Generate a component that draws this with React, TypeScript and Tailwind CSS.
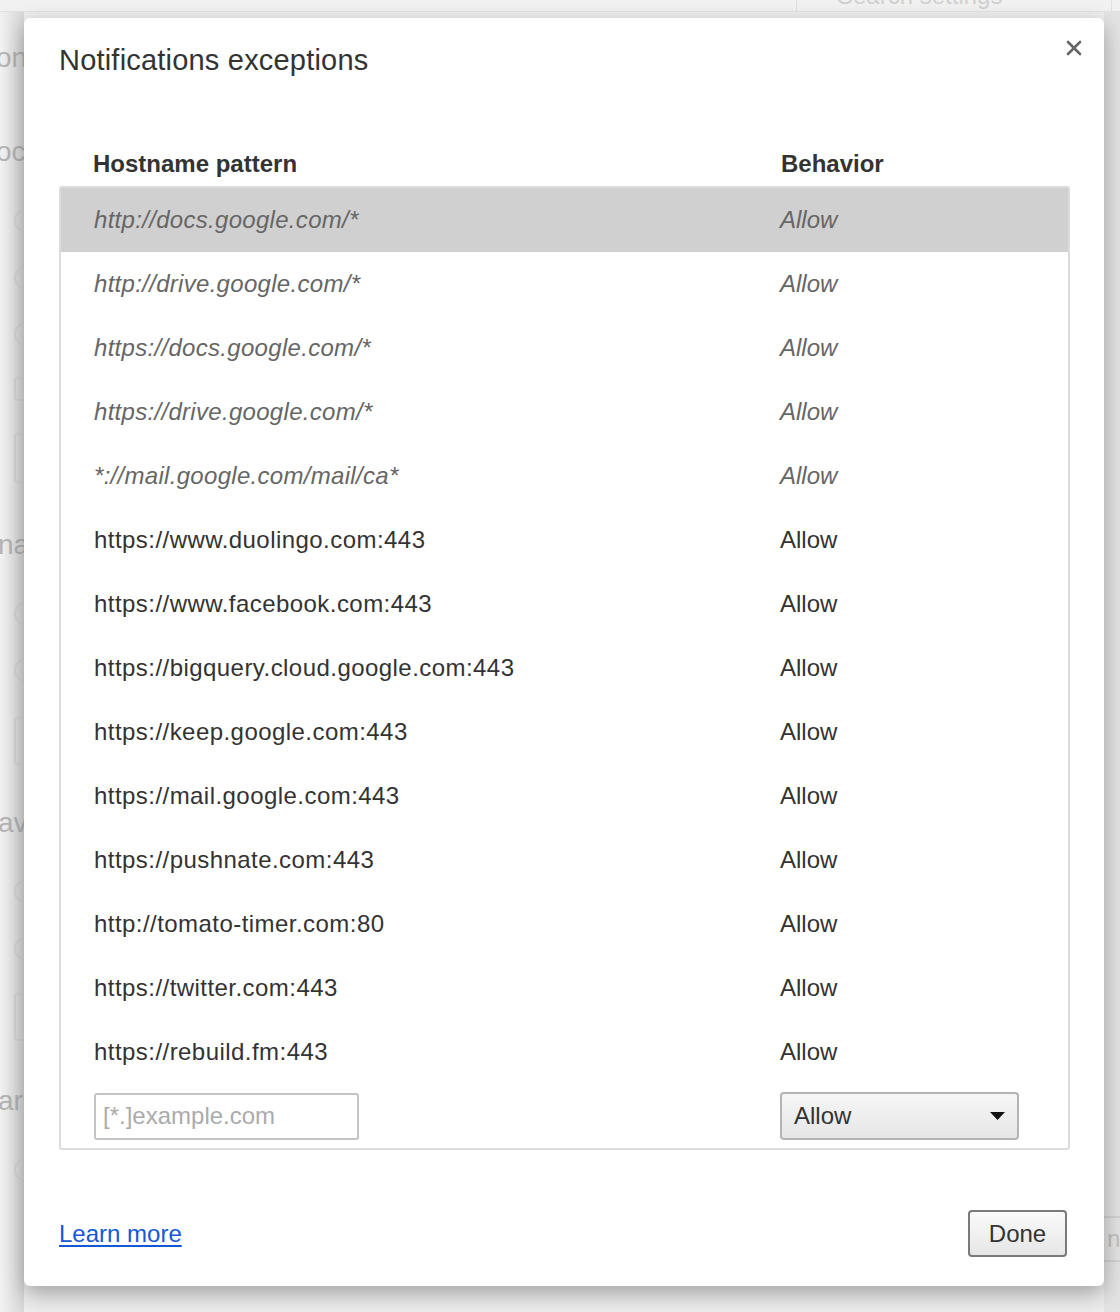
import { X } from "lucide-react";

const rows = [
  { host: "http://docs.google.com/*", italic: true },
  { host: "http://drive.google.com/*", italic: true },
  { host: "https://docs.google.com/*", italic: true },
  { host: "https://drive.google.com/*", italic: true },
  { host: "*://mail.google.com/mail/ca*", italic: true },
  { host: "https://www.duolingo.com:443", italic: false },
  { host: "https://www.facebook.com:443", italic: false },
  { host: "https://bigquery.cloud.google.com:443", italic: false },
  { host: "https://keep.google.com:443", italic: false },
  { host: "https://mail.google.com:443", italic: false },
  { host: "https://pushnate.com:443", italic: false },
  { host: "http://tomato-timer.com:80", italic: false },
  { host: "https://twitter.com:443", italic: false },
  { host: "https://rebuild.fm:443", italic: false },
];

function Radio({ mt }: { mt: string }) {
  return <div className={`${mt} ml-[14px] h-[25px] w-[25px] rounded-full border-2 border-[#d6d6d6]`} />;
}

function Background() {
  return (
    <div className="flex h-[1312px] flex-col bg-[#eeeeee]">
      <div className="flex h-[12px] shrink-0 justify-end overflow-hidden border-b border-[#e2e2e2] bg-[#f1f1f1]">
        <div className="mr-[8px] w-[316px] border-x border-[#e0e0e0] pl-[40px]">
          <span className="-mt-[18px] block text-[24px] leading-[28px] text-[#d0d0d0]">Search settings</span>
        </div>
      </div>
      <div className="flex flex-1">
        <div className="flex w-[24px] flex-col overflow-hidden bg-gradient-to-r from-[#f2f2f2] to-[#d8d8d8] text-[28px] leading-[32px] text-[#b4b4b4]">
          <span className="mt-[30px] -ml-[4px]">on</span>
          <span className="mt-[62px] -ml-[4px]">oc</span>
          <Radio mt="mt-[40px]" />
          <Radio mt="mt-[32px]" />
          <Radio mt="mt-[32px]" />
          <div className="mt-[30px] ml-[14px] h-[24px] w-[24px] rounded-[3px] border-2 border-[#d6d6d6]" />
          <div className="mt-[32px] ml-[14px] h-[50px] w-[24px] rounded-[3px] border-2 border-[#d6d6d6]" />
          <span className="mt-[46px] -ml-[2px]">na</span>
          <Radio mt="mt-[40px]" />
          <Radio mt="mt-[32px]" />
          <div className="mt-[34px] ml-[14px] h-[48px] w-[24px] rounded-[3px] border-2 border-[#d6d6d6]" />
          <span className="mt-[42px] -ml-[2px]">av</span>
          <Radio mt="mt-[40px]" />
          <Radio mt="mt-[32px]" />
          <div className="mt-[32px] ml-[14px] h-[48px] w-[24px] rounded-[3px] border-2 border-[#d6d6d6]" />
          <span className="mt-[44px] -ml-[2px]">ar</span>
          <Radio mt="mt-[40px]" />
        </div>
        <div className="flex-1" />
        <div className="flex w-[16px] flex-col overflow-hidden bg-[#e4e4e4]">
          <div className="mt-[1204px] h-[46px] border-y-2 border-[#d2d2d2] pl-[3px] text-[24px] leading-[42px] text-[#c0c0c0]">ne</div>
        </div>
      </div>
    </div>
  );
}

export default function App() {
  return (
    <div className="relative h-[1312px] w-[1120px] overflow-hidden font-['Liberation_Sans',Arial,sans-serif] text-[24px] text-[#333]">
      <Background />

      <div className="absolute left-[24px] top-[18px] flex h-[1268px] w-[1080px] flex-col rounded-[6px] bg-white pl-[35px] pr-[34px] pb-[29px] pt-[25px] shadow-[0_8px_22px_rgba(0,0,0,0.32)]">
        <button className="absolute right-[18px] top-[18px] text-[#666]">
          <X className="h-[24px] w-[24px]" strokeWidth={2.6} />
        </button>

        <h1 className="text-[29px] leading-[34px] tracking-[0.2px] text-[#333]">Notifications exceptions</h1>

        <div className="mt-[73px] grid grid-cols-[721px_1fr] font-bold leading-[28px] text-[#333]">
          <span className="pl-[34px]">Hostname pattern</span>
          <span className="pl-[1px]">Behavior</span>
        </div>

        <div className="mt-[8px] rounded-[3px] border-2 border-[#dcdcdc]">
          {rows.map((r, i) => (
            <div
              key={r.host}
              className={`grid h-[64px] grid-cols-[719px_1fr] leading-[64px] ${i === 0 ? "bg-[#d0d0d0]" : ""} ${r.italic ? "italic text-[#666]" : "text-[#333]"}`}
            >
              <span className={`pl-[33px] ${r.italic ? "tracking-[0.3px]" : "tracking-[0.45px]"}`}>{r.host}</span>
              <span>Allow</span>
            </div>
          ))}
          <div className="grid h-[64px] grid-cols-[719px_1fr] items-center">
            <div className="pl-[33px]">
              <input
                placeholder="[*.]example.com"
                className="h-[47px] w-[265px] rounded-[3px] border-2 border-[#c4c4c4] px-[7px] text-[24px] text-[#333] outline-none placeholder:text-[#ababab]"
              />
            </div>
            <div className="flex h-[48px] w-[239px] items-center justify-between rounded-[4px] border-2 border-[#b4b4b4] bg-gradient-to-b from-[#f6f6f6] to-[#e6e6e6] pl-[12px] pr-[12px] text-[#333]">
              <span>Allow</span>
              <svg width="15" height="8" viewBox="0 0 15 8">
                <path d="M0 0 L15 0 L7.5 8 Z" fill="#111" />
              </svg>
            </div>
          </div>
        </div>

        <div className="flex-1" />

        <div className="flex items-center justify-between pr-[3px]">
          <a href="#" className="leading-[28px] text-[#1558d6] underline underline-offset-[3px]">Learn more</a>
          <button className="h-[47px] w-[99px] rounded-[4px] border-2 border-[#7a7a7a] bg-gradient-to-b from-[#fafafa] to-[#e6e6e6] text-[24px] text-[#333]">
            Done
          </button>
        </div>
      </div>
    </div>
  );
}
